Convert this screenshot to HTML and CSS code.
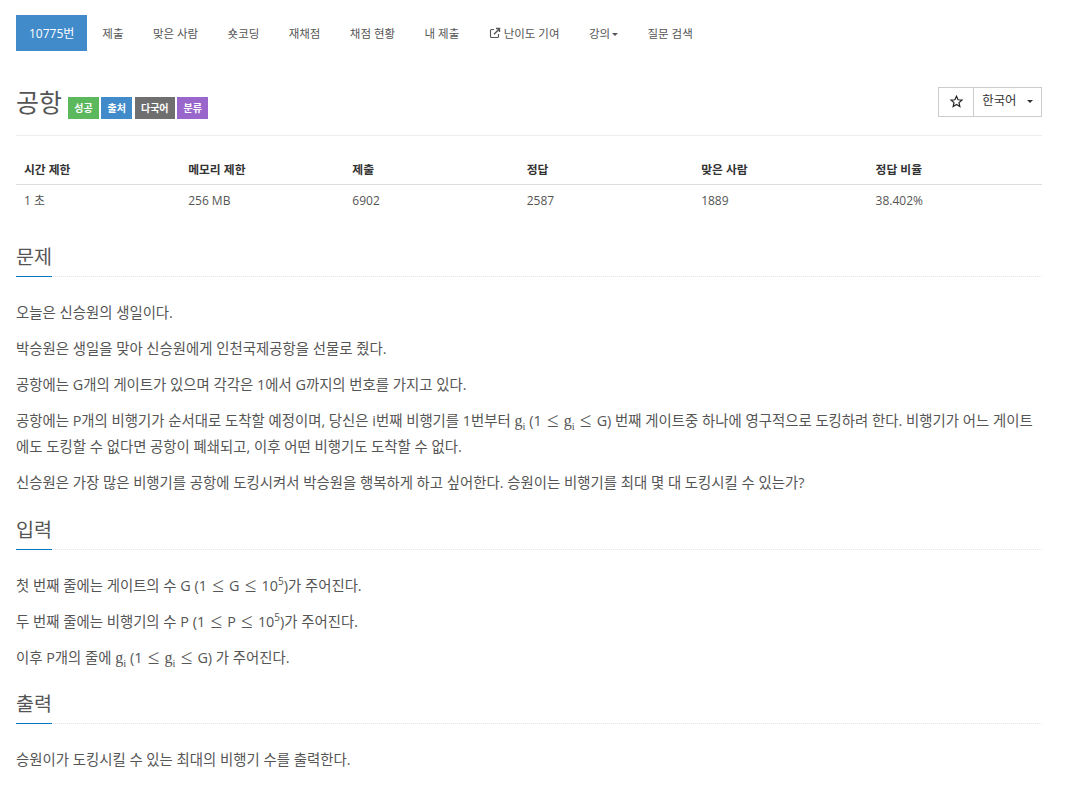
FILE: index.html
```html
<!DOCTYPE html>
<html lang="ko">
<head>
<meta charset="utf-8">
<title>공항</title>
<link rel="stylesheet" href="styles.css">
</head>
<body>
<div class="page">
  <nav class="tabs">
    <a class="tab active">10775번</a>
    <a class="tab">제출</a>
    <a class="tab">맞은 사람</a>
    <a class="tab">숏코딩</a>
    <a class="tab">재채점</a>
    <a class="tab">채점 현황</a>
    <a class="tab">내 제출</a>
    <a class="tab"><svg class="ext" viewBox="0 0 12 12" width="12" height="12"><path d="M9.5 7v2.5a1 1 0 0 1-1 1h-6a1 1 0 0 1-1-1v-6a1 1 0 0 1 1-1H5" fill="none" stroke="#555" stroke-width="1.1"/><path d="M5 7.2 10 2.2M7 1.5h3.5V5" fill="none" stroke="#555" stroke-width="1.4"/></svg>난이도 기여</a>
    <a class="tab">강의<span class="caret"></span></a>
    <a class="tab">질문 검색</a>
  </nav>

  <header class="title-row">
    <h1 class="title">공항
      <span class="label green">성공</span>
      <span class="label blue">출처</span>
      <span class="label gray">다국어</span>
      <span class="label purple">분류</span>
    </h1>
    <div class="btn-group">
      <button class="btn star-btn"><svg viewBox="0 0 14 14" width="13" height="13"><path d="M7 1.3 8.7 5.1 12.8 5.5 9.7 8.2 10.6 12.3 7 10.2 3.4 12.3 4.3 8.2 1.2 5.5 5.3 5.1Z" fill="none" stroke="#222" stroke-width="1.3"/></svg></button>
      <button class="btn lang-btn">한국어 <span class="caret dark"></span></button>
    </div>
  </header>

  <table class="info">
    <thead>
      <tr><th class="c16">시간 제한</th><th class="c16">메모리 제한</th><th class="c17">제출</th><th class="c17">정답</th><th class="c17">맞은 사람</th><th class="c17">정답 비율</th></tr>
    </thead>
    <tbody>
      <tr><td>1 초</td><td>256 MB</td><td>6902</td><td>2587</td><td>1889</td><td>38.402%</td></tr>
    </tbody>
  </table>

  <section class="sec">
    <h2 class="headline"><span class="hl">문제</span></h2>
    <p>오늘은 신승원의 생일이다.</p>
    <p>박승원은 생일을 맞아 신승원에게 인천국제공항을 선물로 줬다.</p>
    <p>공항에는 G개의 게이트가 있으며 각각은 1에서 G까지의 번호를 가지고 있다.</p>
    <p>공항에는 P개의 비행기가 순서대로 도착할 예정이며, 당신은 i번째 비행기를 1번부터 <span class="m">g<sub>i</sub></span> (1 <span class="le">≤</span> <span class="m">g<sub>i</sub></span> <span class="le">≤</span> G) 번째 게이트중 하나에 영구적으로 도킹하려 한다. 비행기가 어느 게이트<br>에도 도킹할 수 없다면 공항이 폐쇄되고, 이후 어떤 비행기도 도착할 수 없다.</p>
    <p>신승원은 가장 많은 비행기를 공항에 도킹시켜서 박승원을 행복하게 하고 싶어한다. 승원이는 비행기를 최대 몇 대 도킹시킬 수 있는가?</p>
  </section>

  <section class="sec">
    <h2 class="headline"><span class="hl">입력</span></h2>
    <p>첫 번째 줄에는 게이트의 수 G (1 <span class="le">≤</span> G <span class="le">≤</span> 10<sup>5</sup>)가 주어진다.</p>
    <p>두 번째 줄에는 비행기의 수 P (1 <span class="le">≤</span> P <span class="le">≤</span> 10<sup>5</sup>)가 주어진다.</p>
    <p>이후 P개의 줄에 <span class="m">g<sub>i</sub></span> (1 <span class="le">≤</span> <span class="m">g<sub>i</sub></span> <span class="le">≤</span> G) 가 주어진다.</p>
  </section>

  <section class="sec">
    <h2 class="headline"><span class="hl">출력</span></h2>
    <p>승원이가 도킹시킬 수 있는 최대의 비행기 수를 출력한다.</p>
  </section>
</div>
</body>
</html>
```
FILE: styles.css
```css
* { box-sizing: border-box; }
html, body { margin: 0; padding: 0; background: #fff; }
body {
  font-family: "Open Sans", "Noto Sans CJK KR", sans-serif;
  font-size: 14.4px;
  line-height: 26px;
  color: #555;
  height: 792px;
  overflow: hidden;
}
.page { padding: 15px 34px 0 16px; }

.tabs { display: flex; height: 36px; }
.tab {
  display: flex;
  align-items: center;
  padding: 2px 14.7px 0;
  font-size: 11.5px;
  color: #555;
  white-space: pre;
}
.tab.active { padding: 2px 13px 0; margin-right: 0.3px; background: #428bca; color: #fff; font-size: 12px; }
.ext { flex: none; margin: 0 3px 2px 0; }
.caret {
  display: inline-block;
  width: 0; height: 0;
  margin-left: 2px;
  border-top: 3px solid #555;
  border-left: 3.5px solid transparent;
  border-right: 3.5px solid transparent;
  vertical-align: middle;
}
.caret.dark { border-top-color: #333; margin-left: 7px; }

.title-row {
  display: flex;
  justify-content: space-between;
  margin-top: 34px;
  height: 51px;
  border-bottom: 1px solid #eee;
}
.title {
  margin: 0;
  font-size: 25px;
  font-weight: 400;
  line-height: 34px;
  color: #555;
  display: flex;
  align-items: flex-start;
  gap: 2.6px;
}
.label {
  margin-top: 12px;
  padding: 0 6.2px;
  height: 22px;
  line-height: 22px;
  font-size: 10px;
  font-weight: 700;
  color: #fff;
}
.label.green { background: #5cb85c; margin-left: 3.4px; }
.label.blue { background: #428bca; }
.label.gray { background: #6f6f6f; }
.label.purple { background: #9966cc; }

.btn-group { display: flex; height: 30px; margin-top: 2px; }
.btn {
  font: inherit;
  font-size: 12.4px;
  line-height: 1;
  color: #333;
  background: #fff;
  border: 1px solid #ccc;
  padding: 0;
}
.star-btn { width: 36px; display: flex; align-items: center; justify-content: center; padding-bottom: 2px; }
.lang-btn { width: 69px; margin-left: -1px; padding-bottom: 2px; }

.info { width: 100%; border-collapse: collapse; margin: 19px 0 25px; font-size: 12px; table-layout: fixed; }
.c16 { width: 16%; }
.c17 { width: 17%; }
.info th {
  text-align: left;
  font-weight: 700;
  font-size: 11.8px;
  padding: 0 8px;
  height: 29px;
  border-bottom: 1px solid #ddd;
  color: #333;
}
.info td { padding: 2px 8px 0; height: 32px; color: #555; }

.sec { margin-bottom: 17.5px; }
.headline {
  margin: 0 0 22px;
  padding-top: 1px;
  font-size: 19.6px;
  font-weight: 400;
  line-height: 30px;
  height: 36px;
  border-bottom: 1px dotted #e5e5e5;
  color: #555;
}
.hl { display: inline-block; height: 35px; width: 36px; border-bottom: 1px solid #0076c0; white-space: nowrap; }
.sec p { margin: 0 0 9px; padding-top: 1px; }
.m { font-family: "Liberation Serif", serif; font-size: 16px; }
.m sub { font-size: 10.5px; line-height: 0; }
.le { font-family: "Liberation Serif", serif; font-size: 21px; line-height: 0; margin: 0 1.5px; vertical-align: -1px; }
sup { font-size: 10px; line-height: 0; }
```
